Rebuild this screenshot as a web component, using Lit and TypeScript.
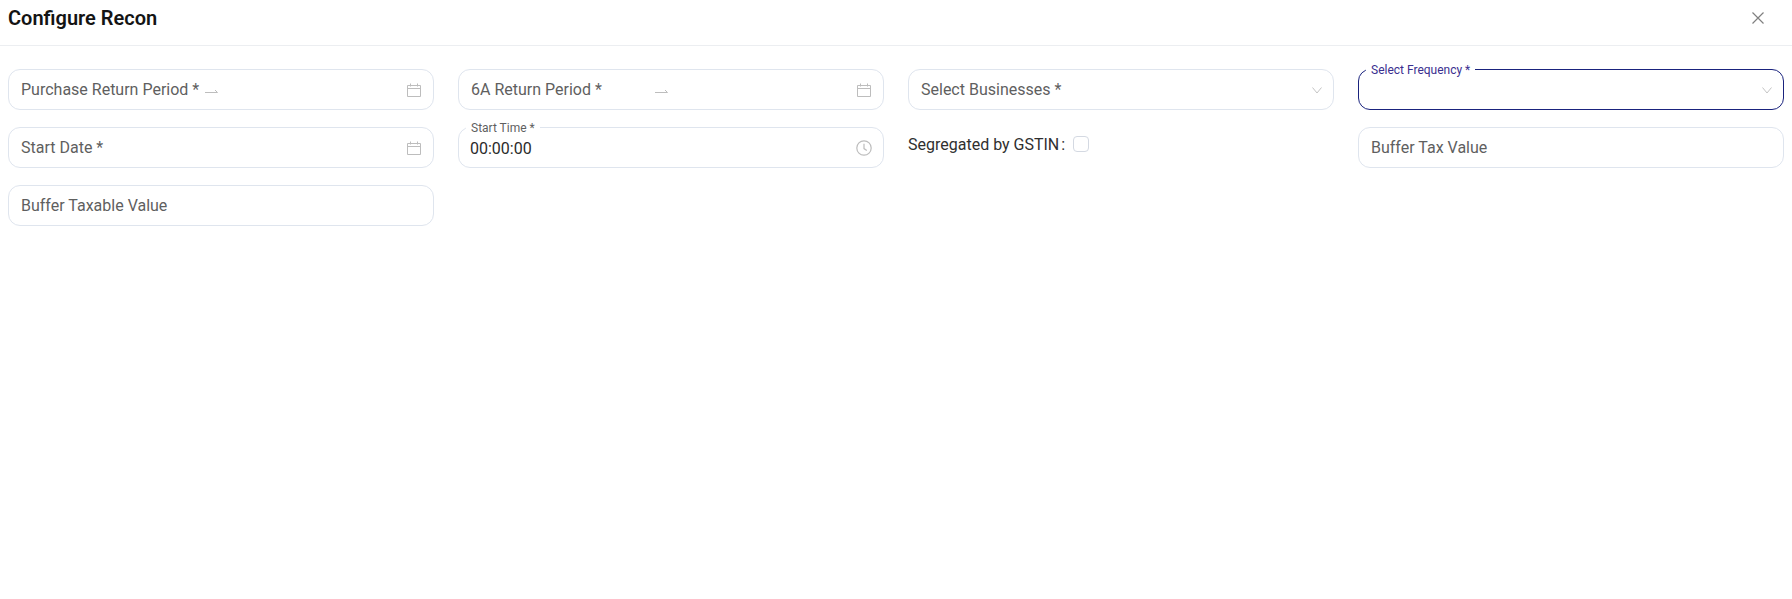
import { LitElement, html, css, svg } from "lit";
import { customElement } from "lit/decorators.js";

const calendar = html`<svg class="icon" width="16" height="16" viewBox="0 0 16 16" fill="none" stroke="#bdbdbd" stroke-width="1"><path d="M1.5 3.5h13v11h-13zM1.5 6.5h13M4.5 1.5v3M11.5 1.5v3"/></svg>`;
const clock = html`<svg class="icon" width="16" height="16" viewBox="0 0 16 16" fill="none" stroke="#bdbdbd" stroke-width="1.2"><circle cx="8" cy="8" r="7.2"/><path d="M8 3.8V8.6l2.8 2"/></svg>`;
const chevron = html`<svg class="icon" width="10" height="10" viewBox="0 0 10 10" fill="none" stroke="#c4c4c4" stroke-width="1"><path d="M.5 2.5l4.5 5.5 4.5-5.5"/></svg>`;
const arrow = svg`<svg class="arrow" width="13" height="6" viewBox="0 0 13 6" fill="none" stroke="#bdbdbd" stroke-width="1"><path d="M0 4.5h12.5L10 2"/></svg>`;

@customElement("app-root")
export class AppRoot extends LitElement {
  static styles = css`
    :host { display: block; background: #fff; font-family: Roboto, "Liberation Sans", sans-serif; height: 599px; }
    .header { display: flex; align-items: center; justify-content: space-between; height: 36px; padding: 0 28px 9px 8px; border-bottom: 1px solid #eceef1; margin-bottom: 23px; }
    .title { font-size: 20px; font-weight: 600; color: #141414; line-height: 36px; }
    .close { display: block; }
    .grid { display: grid; grid-template-columns: repeat(4, 426px); column-gap: 24px; row-gap: 17px; padding: 0 8px; }
    .field { position: relative; box-sizing: border-box; height: 41px; border: 1px solid #dfe5ee; border-radius: 12px; display: flex; align-items: center; padding: 0 11px 0 12px; font-size: 16px; color: #5f5f5f; }
    .text { flex: none; white-space: nowrap; }
    .spacer { flex: 1; }
    .icon { flex: none; display: block; }
    .range .text { width: 184px; }
    .arrow { display: block; margin-top: 2px; }
    .value { color: #2b2b2b; margin-left: -1px; margin-top: 1px; }
    .legend { position: absolute; left: 7px; top: -7px; padding: 0 5px; font-size: 12px; line-height: 14px; background: #fff; color: #5f5f5f; }
    .focused { border-color: #1a237e; }
    .focused .legend { color: #3a2f8f; }
    .check { display: flex; align-items: center; height: 34px; font-size: 16px; color: #2f2f2f; }
    .colon { margin-left: 2px; margin-right: 8px; }
    .box { width: 16px; height: 16px; box-sizing: border-box; border: 1px solid #d4d9e2; border-radius: 4px; }
  `;

  render() {
    return html`
      <div class="header">
        <div class="title">Configure Recon</div>
        <svg class="close" width="12" height="12" viewBox="0 0 12 12" fill="none" stroke="#808080" stroke-width="1.2"><path d="M.5.5l11 11M11.5.5l-11 11"/></svg>
      </div>
      <div class="grid">
        <div class="field range"><span class="text">Purchase Return Period *</span>${arrow}<span class="spacer"></span>${calendar}</div>
        <div class="field range"><span class="text">6A Return Period *</span>${arrow}<span class="spacer"></span>${calendar}</div>
        <div class="field"><span class="text">Select Businesses *</span><span class="spacer"></span>${chevron}</div>
        <div class="field focused"><span class="legend">Select Frequency *</span><span class="spacer"></span>${chevron}</div>

        <div class="field"><span class="text">Start Date *</span><span class="spacer"></span>${calendar}</div>
        <div class="field"><span class="legend">Start Time *</span><span class="text value">00:00:00</span><span class="spacer"></span>${clock}</div>
        <div class="check"><span>Segregated by GSTIN</span><span class="colon">:</span><span class="box"></span></div>
        <div class="field"><span class="text">Buffer Tax Value</span></div>

        <div class="field"><span class="text">Buffer Taxable Value</span></div>
      </div>
    `;
  }
}
